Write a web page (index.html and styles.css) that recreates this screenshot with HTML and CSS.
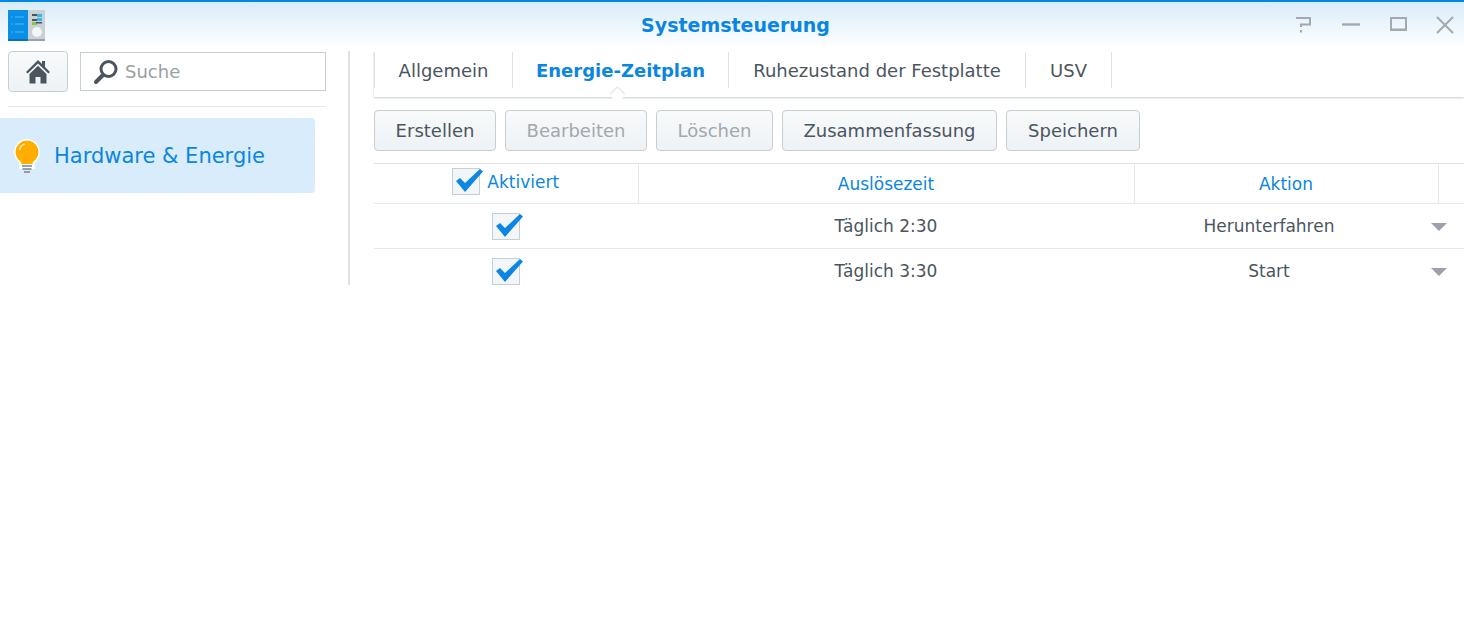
FILE: index.html
```html
<!DOCTYPE html>
<html lang="de">
<head>
  <meta charset="UTF-8">
  <title>Systemsteuerung</title>
  <link rel="stylesheet" href="styles.css">
</head>
<body>

  <!-- TITELLEISTE -->
  <div class="titelleiste">
    <svg class="app-icon" width="37" height="31" viewBox="0 0 37 31">
      <rect x="20" y="0" width="17" height="30" fill="#c9d0d6"/>
      <rect x="0" y="0" width="20" height="29" fill="#0a8fe6"/>
      <rect x="0" y="29" width="20" height="2" fill="#0672b8"/>
      <rect x="20" y="29" width="17" height="2" fill="#9aa3aa"/>
      <path d="M3 7h1.5M3 14h1.5M3 22h2M7 7h9M7 14h9M7 22h9" stroke="#58b8f2" stroke-width="1"/>
      <rect x="24" y="4" width="9" height="2" fill="#4a5560"/>
      <rect x="29" y="4" width="5" height="3" fill="#37b7e6"/>
      <rect x="24" y="9" width="9" height="2" fill="#4a5560"/>
      <rect x="29" y="8" width="5" height="3" fill="#37b7e6"/>
      <rect x="24" y="12" width="5" height="3" fill="#8cc63f"/>
      <rect x="28" y="12" width="6" height="1.5" fill="#4a5560"/>
      <circle cx="29" cy="22" r="5" fill="#f3f5f6"/>
    </svg>
    <div class="fenster-titel">Systemsteuerung</div>
    <div class="fenster-knoepfe">
      <svg width="20" height="20" viewBox="0 0 20 20"><path d="M2 3h14v6.5H7v2.5M7 15v2.5" fill="none" stroke="#a2a9b0" stroke-width="2"/></svg>
      <svg width="20" height="20" viewBox="0 0 20 20"><path d="M1 9.5h18" stroke="#a2a9b0" stroke-width="2.4"/></svg>
      <svg width="20" height="20" viewBox="0 0 20 20"><path d="M2 2h17v2H2zM2 4h2v11H2zM17 4h2v11h-2zM2 13.5h17V16H2z" fill="#a2a9b0"/></svg>
      <svg width="20" height="20" viewBox="0 0 20 20"><path d="M2 2l16 16M18 2L2 18" stroke="#a2a9b0" stroke-width="2"/></svg>
    </div>
  </div>

  <div class="fenster-inhalt">

    <!-- SEITENLEISTE -->
    <div class="seitenleiste">
      <div class="suchzeile">
        <button class="home-knopf">
          <svg width="26" height="25" viewBox="0 0 26 25"><path d="M13 1L1 13l1.6 1.6L13 4.4l10.4 10.2L25 13l-5-5V2h-3v3z" fill="#4b5560"/><path d="M4.5 15L13 6.8 21.5 15v9.5h-6V18h-5v6.500h-6z" fill="#4b5560"/></svg>
        </button>
        <div class="suchfeld">
          <svg width="26" height="26" viewBox="0 0 26 26"><circle cx="15.500" cy="10" r="7.500" fill="none" stroke="#4b5560" stroke-width="3"/><path d="M10 16l-7 7" stroke="#4b5560" stroke-width="4" stroke-linecap="round"/></svg>
          <span>Suche</span>
        </div>
      </div>
      <div class="menue-eintrag">
        <svg width="28" height="36" viewBox="0 0 28 36"><path d="M14 1a13 13 0 0 0-8 23.200V31h16v-6.800A13 13 0 0 0 14 1z" fill="#fff"/><path d="M14 2.500a11.500 11.500 0 0 0-6.500 21c.7.600 1 1.500 1 2.500h11c0-1 .3-1.900 1-2.500A11.500 11.500 0 0 0 14 2.500z" fill="#ffae00"/><path d="M6.500 12A7.500 7.500 0 0 1 12 6" fill="none" stroke="#ffe29a" stroke-width="1.800"/><path d="M9 28h10M9.500 31h9M11 34h6" stroke="#7d8388" stroke-width="1.600"/></svg>
        <span>Hardware &amp; Energie</span>
      </div>
    </div>

    <!-- HAUPTBEREICH -->
    <div class="hauptbereich">
      <div class="tabs">
        <div class="tab tab-allgemein">Allgemein</div>
        <div class="tab tab-aktiv">Energie-Zeitplan</div>
        <div class="tab tab-ruhe">Ruhezustand der Festplatte</div>
        <div class="tab tab-usv">USV</div>
      </div>

      <div class="werkzeuge">
        <button class="knopf k-erstellen">Erstellen</button>
        <button class="knopf k-bearbeiten" disabled>Bearbeiten</button>
        <button class="knopf k-loeschen" disabled>Löschen</button>
        <button class="knopf k-zusammen">Zusammenfassung</button>
        <button class="knopf k-speichern">Speichern</button>
      </div>

      <table class="tabelle">
        <colgroup><col class="sp-aktiv"><col class="sp-zeit"><col class="sp-aktion"><col></colgroup>
        <thead>
          <tr>
            <th><span class="kopf-aktiv"><span class="haken"><svg width="30" height="25" viewBox="0 0 30 25"><path d="M2 13l4-3 5 5L26 1l3 2.500L11 24z" fill="#0b86e3"/></svg></span>Aktiviert</span></th>
            <th>Auslösezeit</th>
            <th>Aktion</th>
            <th></th>
          </tr>
        </thead>
        <tbody>
          <tr>
            <td><span class="haken"><svg width="30" height="25" viewBox="0 0 30 25"><path d="M2 13l4-3 5 5L26 1l3 2.500L11 24z" fill="#0b86e3"/></svg></span></td>
            <td>Täglich 2:30</td>
            <td colspan="2"><div class="auswahl"><span>Herunterfahren</span><i class="pfeil"></i></div></td>
          </tr>
          <tr class="letzte">
            <td><span class="haken"><svg width="30" height="25" viewBox="0 0 30 25"><path d="M2 13l4-3 5 5L26 1l3 2.500L11 24z" fill="#0b86e3"/></svg></span></td>
            <td>Täglich 3:30</td>
            <td colspan="2"><div class="auswahl"><span>Start</span><i class="pfeil"></i></div></td>
          </tr>
        </tbody>
      </table>
    </div>
  </div>

</body>
</html>
```

FILE: styles.css
```css
html, body { margin: 0; padding: 0; background: #fff; }
body { font-family: "DejaVu Sans", sans-serif; font-size: 18px; color: #4b5560; height: 622px; overflow: hidden; }

.titelleiste {
  height: 46px; border-top: 2px solid #0086e5;
  background: linear-gradient(#d9ecfa, #ffffff);
  display: flex; align-items: center; position: relative;
}
.app-icon { margin: 1px 0 0 8px; }
.fenster-titel {
  position: absolute; left: 0; right: 0; text-align: center;
  font-size: 19px; font-weight: bold; color: #0b86e0; margin-top: -1px; padding-left: 7px;
}
.fenster-knoepfe { margin-left: auto; margin-right: 9px; display: flex; gap: 27px; position: relative; }

.fenster-inhalt { display: flex; align-items: flex-start; padding-top: 3px; }

.seitenleiste {
  width: 348px; height: 234px; border-right: 2px solid #dfe2e5; flex: none;
}
.suchzeile {
  display: flex; gap: 12px; margin-left: 8px; width: 318px; height: 55px;
  border-bottom: 1px solid #e6e9eb; box-sizing: content-box;
}
.home-knopf {
  width: 60px; height: 41px; padding: 0; border: 1px solid #c6ced6; border-radius: 4px;
  background: linear-gradient(#f8fafb, #eef2f5); display: flex; align-items: center; justify-content: center;
}
.suchfeld {
  width: 246px; height: 39px; margin-top: 1px; box-sizing: border-box; border: 1px solid #c6cfd8;
  display: flex; align-items: center; padding-left: 12px; gap: 6px; color: #9a9fa5;
}
.menue-eintrag {
  margin-top: 11px; width: 315px; height: 75px; background: #d8ecfc; border-radius: 0 4px 4px 0;
  display: flex; align-items: center; padding-left: 13px; box-sizing: border-box; gap: 13px;
  color: #0b86e0; font-size: 21px;
}

.hauptbereich { margin-left: 24px; flex: 1; min-width: 0; }

.tabs {
  display: flex; height: 46px; position: relative;
  box-shadow: 0 1px 2px #c8ccd0; padding-bottom: 0;
}
.tab {
  display: flex; align-items: center; justify-content: center; box-sizing: border-box; height: 36px; margin-top: 1px;
  border-left: 1px solid #dfe2e5; padding-top: 0; align-self: flex-start;
}
.tab-allgemein { width: 138px; }
.tab-aktiv { width: 216px; color: #0b86e0; font-weight: bold; }
.tab-ruhe { width: 297px; }
.tab-usv { width: 87px; border-right: 1px solid #dfe2e5; }
.tab-aktiv::after {
  content: ""; position: absolute; left: 238px; top: 39px; width: 11px; height: 11px;
  background: #fff; transform: rotate(45deg); box-shadow: -1px -1px 1px #dfe2e5;
}

.werkzeuge { display: flex; gap: 9px; margin-top: 13px; }
.knopf {
  height: 41px; box-sizing: border-box; padding: 0; border: 1px solid #c6ced6; border-radius: 4px;
  background: linear-gradient(#f8fafb, #eef2f5); font: inherit; color: #4b5560;
}
.knopf:disabled { color: #a2a8ae; }
.k-erstellen { width: 122px; }
.k-bearbeiten { width: 142px; }
.k-loeschen { width: 117px; }
.k-zusammen { width: 215px; }
.k-speichern { width: 134px; }

.tabelle {
  width: 1090px; margin-top: 12px; border-collapse: collapse; table-layout: fixed;
}
.sp-aktiv { width: 264px; }
.sp-zeit { width: 496px; }
.sp-aktion { width: 304px; }
.tabelle th {
  height: 40px; padding: 0; box-sizing: border-box; font-weight: normal; color: #0b86e0;
  border-top: 1px solid #dfe2e5; border-bottom: 1px solid #e6e9eb; border-right: 1px solid #e6e9eb; font-size: 17px;
}
.tabelle th:last-child { border-right: 0; }
.tabelle td { height: 44px; padding: 0; text-align: center; border-bottom: 1px solid #e6e9eb; font-size: 17px; }
.tabelle tr.letzte td { border-bottom: 0; }
.kopf-aktiv { display: inline-flex; align-items: center; gap: 7px; }
.haken {
  display: inline-block; position: relative; width: 28px; height: 27px; box-sizing: border-box;
  background: #f3f6f8; border: 1px solid #c6cfd8; vertical-align: middle;
}
.haken svg { position: absolute; left: 1px; top: -1px; }
.auswahl { display: flex; align-items: center; position: relative; padding-right: 60px; justify-content: center; }
.pfeil {
  position: absolute; right: 17px; top: 7px; width: 0; height: 0;
  border-left: 8px solid transparent; border-right: 8px solid transparent; border-top: 8px solid #9ba2ab;
}
```
